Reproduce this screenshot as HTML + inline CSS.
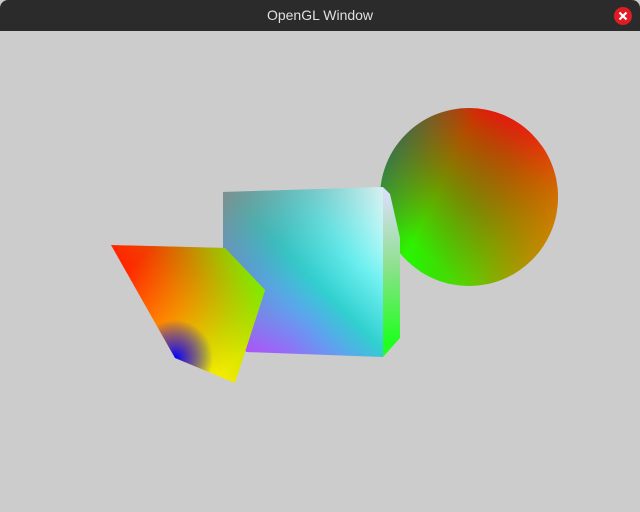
<!DOCTYPE html>
<html><head><style>
html,body{margin:0;padding:0;width:640px;height:512px;overflow:hidden;background:#cccccc}
.bar{position:absolute;left:0;top:0;width:640px;height:31px;background:#2b2b2b;border-radius:8px 8px 0 0}
.t{position:absolute;left:0;width:640px;top:7px;text-align:center;color:#e0e0e0;font:14px "Liberation Sans",sans-serif}
</style></head><body>
<div class="bar"><div class="t">OpenGL Window</div></div>
<svg width="640" height="512" style="position:absolute;left:0;top:0">
<defs>
<clipPath id="pc"><polygon points="111,245 225,248 265,290 235,383 175,358"/></clipPath>
<linearGradient id="cf" x1="223" y1="350" x2="383" y2="190" gradientUnits="userSpaceOnUse">
<stop offset="0" stop-color="#d030ff"/><stop offset="0.35" stop-color="#60a0f0"/><stop offset="0.5" stop-color="#30d0d0"/><stop offset="0.7" stop-color="#70f0f0"/><stop offset="1" stop-color="#ffffff"/></linearGradient>
<linearGradient id="cf2" x1="223" y1="192" x2="330" y2="300" gradientUnits="userSpaceOnUse">
<stop offset="0" stop-color="#888888" stop-opacity="0.9"/><stop offset="0.5" stop-color="#4aa0a0" stop-opacity="0.4"/><stop offset="1" stop-color="#30d0d0" stop-opacity="0"/></linearGradient>
<linearGradient id="cs" x1="383" y1="190" x2="400" y2="340" gradientUnits="userSpaceOnUse">
<stop offset="0" stop-color="#ddddff"/><stop offset="0.5" stop-color="#90e090"/><stop offset="1" stop-color="#20ff20"/></linearGradient>
<linearGradient id="py" x1="150" y1="250" x2="245" y2="350" gradientUnits="userSpaceOnUse">
<stop offset="0" stop-color="#ff2000"/><stop offset="0.45" stop-color="#ff8800"/><stop offset="0.8" stop-color="#e8e000"/><stop offset="1" stop-color="#ffff00"/></linearGradient>
<linearGradient id="py2" x1="265" y1="260" x2="150" y2="330" gradientUnits="userSpaceOnUse">
<stop offset="0" stop-color="#60ff00" stop-opacity="1"/><stop offset="0.5" stop-color="#90c000" stop-opacity="0.4"/><stop offset="1" stop-color="#ff8800" stop-opacity="0"/></linearGradient>
<radialGradient id="pb" cx="175" cy="358" r="38" gradientUnits="userSpaceOnUse">
<stop offset="0" stop-color="#0000ff"/><stop offset="0.4" stop-color="#4020c0" stop-opacity="0.8"/><stop offset="1" stop-color="#0000ff" stop-opacity="0"/></radialGradient>
<linearGradient id="sp" x1="530" y1="125" x2="400" y2="270" gradientUnits="userSpaceOnUse">
<stop offset="0" stop-color="#ff0010"/><stop offset="0.2" stop-color="#c04000"/><stop offset="0.5" stop-color="#7a8a00"/><stop offset="0.85" stop-color="#30f000"/><stop offset="1" stop-color="#20ff00"/></linearGradient>
<linearGradient id="sp2" x1="380" y1="150" x2="560" y2="240" gradientUnits="userSpaceOnUse">
<stop offset="0" stop-color="#206070" stop-opacity="0.8"/><stop offset="0.35" stop-color="#606030" stop-opacity="0"/><stop offset="0.7" stop-color="#c09000" stop-opacity="0.3"/><stop offset="1" stop-color="#e09000" stop-opacity="0.8"/></linearGradient>
</defs>
<circle cx="469" cy="197" r="89" fill="url(#sp)"/>
<circle cx="469" cy="197" r="89" fill="url(#sp2)"/>
<polygon points="383,187 390,194 400,238 400,338 383,357" fill="url(#cs)"/>
<polygon points="223,192 383,187 383,357 246,352 223,300" fill="url(#cf)"/>
<polygon points="223,192 383,187 383,357 246,352 223,300" fill="url(#cf2)"/>
<polygon points="111,245 225,248 265,290 235,383 175,358" fill="url(#py)"/>
<polygon points="111,245 225,248 265,290 235,383 175,358" fill="url(#py2)"/>
<rect x="100" y="240" width="170" height="150" fill="url(#pb)" clip-path="url(#pc)"/>
<circle cx="623" cy="16" r="9" fill="#e01b24"/>
<path d="M619.5 12.5l7 7M626.5 12.5l-7 7" stroke="#fff" stroke-width="2.2"/>
</svg>
</body></html>
